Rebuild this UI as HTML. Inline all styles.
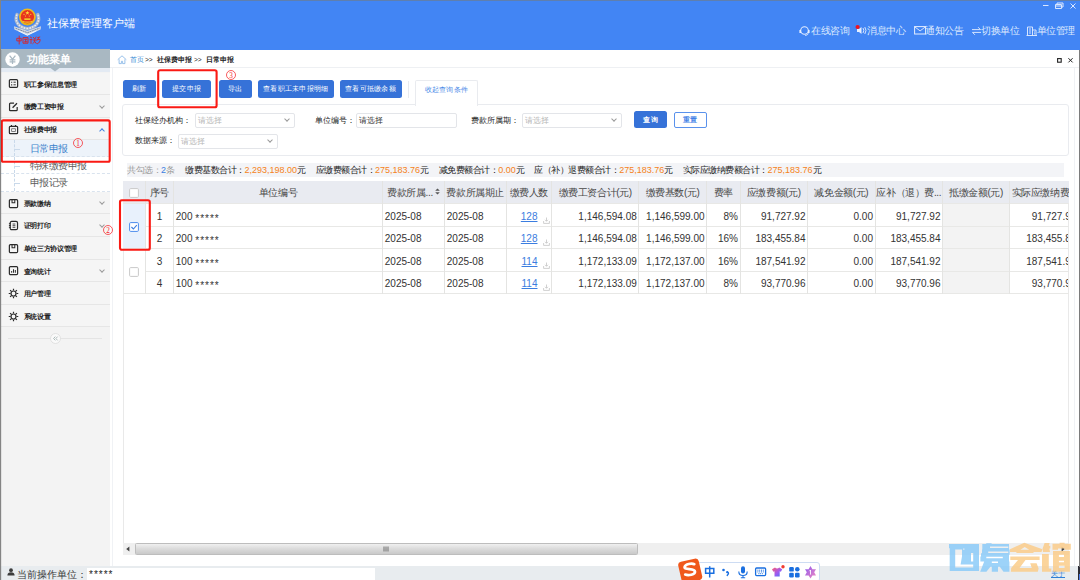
<!DOCTYPE html>
<html lang="zh">
<head>
<meta charset="utf-8">
<title>社保费管理客户端</title>
<style>
*{box-sizing:border-box;margin:0;padding:0}
html,body{width:1080px;height:580px;overflow:hidden;background:#fff;font-family:"Liberation Sans",sans-serif;color:#333}
#app{position:relative;width:1080px;height:580px;overflow:hidden;background:#fff}
.abs,#app>div,#app>svg,#app>span,#app>a{position:absolute}
/* header */
#hdr{left:0;top:0;width:1080px;height:49.5px;background:#4285f4;border-top:1px solid #5f7fae}
#title{left:46.5px;top:16px;font-size:11px;line-height:15px;color:#fff;white-space:nowrap;}
.nav{top:24px;font-size:10px;line-height:14px;color:#dde9fe;white-space:nowrap;letter-spacing:-.5px}
/* sidebar */
#side{left:0;top:49px;width:110px;height:517px;background:#f3f3f3}
#sidehd{left:1px;top:49px;width:109px;height:19.4px;background:#a9b8c2}
#sidehd b{position:absolute;left:26px;top:2.5px;font-size:11px;line-height:15px;color:#fff;letter-spacing:.1px;white-space:nowrap}
#sidestrip{left:1px;top:68.3px;width:109px;height:4.2px;background:#e3eaf3}
.mi{left:1px;width:109px;height:22.6px;border-bottom:1px solid #e6e6e6;background:#f5f5f5}
.mi b{position:absolute;left:22.5px;top:7.2px;font-size:7px;line-height:10px;color:#1c1c1c;white-space:nowrap;letter-spacing:-.3px}
.mi svg{position:absolute;left:6.7px;top:5.8px;width:11px;height:11px}
.mi em{position:absolute;left:99px;top:8.5px;width:4px;height:4px;border-right:1px solid #9a9a9a;border-bottom:1px solid #9a9a9a;transform:rotate(45deg) scale(1,1)}
.mi em.up{top:10.5px;border-color:#3f7fe0;transform:rotate(-135deg)}
.sub{left:1px;width:109px;background:#fff;font-size:10px;letter-spacing:-.5px;line-height:12px;color:#5a5a5a;border-bottom:1px dashed #d9e3ee}
.sub span{position:absolute;left:28.5px;top:3px;white-space:nowrap}
.sub u{position:absolute;left:13px;top:0;bottom:0;width:0;border-left:1px dashed #c9d9ea}
.sub s{position:absolute;left:13px;top:9px;width:6px;height:0;border-top:1px dashed #c9d9ea}
.red{border:1.6px solid #f5181c;border-radius:1px}
.num{color:#f5181c;font-size:9.5px;line-height:11px}
/* main */
#crumb{left:110px;top:49.5px;width:970px;height:18px;background:#fff;border-bottom:1px solid #eef0f3;font-size:6.6px;line-height:10px}
#crumb span{position:absolute;top:5px;white-space:nowrap}
.btn{top:80px;height:18px;background:#3672d8;border-radius:2.5px;color:#fff;font-size:7px;letter-spacing:.25px;text-align:center;line-height:18px;white-space:nowrap}
#status{left:0;top:566px;width:1080px;height:14px;background:#e8ecef}
/*MAINCSS*/
.lbl{font-size:8px;line-height:11px;color:#222;white-space:nowrap;letter-spacing:.1px}
.sel{height:15px;border:1px solid #e3e5e9;border-radius:2px;background:#fff;font-size:8.2px;line-height:13px;padding-left:2px;white-space:nowrap}
.sel i{position:absolute;right:5px;top:3px;width:4px;height:4px;border-right:1px solid #999;border-bottom:1px solid #999;transform:rotate(45deg)}
#sum .s{position:absolute;top:0}
#sum .o{color:#f58220;font-size:9px;letter-spacing:0}
#sum .c{letter-spacing:0}
/*TABLECSS*/
.dc .st{letter-spacing:1px;position:relative;top:2.4px}
.hl{height:1px;background:#e8e8e6}
.vl{width:1px;background:#e4e4e2}
.hc{font-size:10px;letter-spacing:-.4px;line-height:24.6px;color:#484848;white-space:nowrap}
.dc{font-size:10px;line-height:25.2px;color:#333;white-space:nowrap}
/*/MAINCSS*/
</style>
</head>
<body>
<div id="app">
<!-- HEADER -->
<div id="hdr"></div>
<svg id="logo" style="left:10px;top:4px" width="36" height="42" viewBox="10 4 36 42">
  <path d="M17 14.500C14.300 21.500 18.500 27.300 27.400 28.600C36.300 27.300 40.500 21.500 37.800 14.500" fill="none" stroke="#a9b6cb" stroke-width="3.400" stroke-linecap="round"/>
  <path d="M17 14.500C14.300 21.500 18.500 27.300 27.400 28.600C36.300 27.300 40.500 21.500 37.800 14.500" fill="none" stroke="#e9edf4" stroke-width="1.500" stroke-dasharray="1.600 1.200"/>
  <path d="M14 26.300L27.400 30.800L41 26.300L40.600 29.400L27.400 35.600L14.400 29.400Z" fill="#d3dae5"/>
  <path d="M15.500 28.200L27.400 32.700L39.500 28.200" fill="none" stroke="#73819a" stroke-width=".9" stroke-dasharray="2 .5"/>
  <path d="M18.500 30.800L27.400 35.200L36.300 30.800" fill="none" stroke="#f5f7fa" stroke-width="1"/>
  <circle cx="27.400" cy="17" r="8.400" fill="#efb91d"/>
  <circle cx="27.400" cy="16.800" r="6.700" fill="#e8351f"/>
  <path d="M27.400 10.700l.6 1.500h1.500l-1.200 1 .5 1.500-1.400-.9-1.400.9.500-1.500-1.200-1h1.500z" fill="#ffd83a"/>
  <circle cx="24" cy="14.300" r=".6" fill="#ffd83a"/><circle cx="30.800" cy="14.300" r=".6" fill="#ffd83a"/><circle cx="25.500" cy="16" r=".55" fill="#ffd83a"/><circle cx="29.300" cy="16" r=".55" fill="#ffd83a"/>
  <path d="M24.300 18.300h6.200v1.700h-6.200z" fill="#f2c12c"/>
  <path d="M22.300 21.200c3.200 1.100 7 1.100 10.200 0" fill="none" stroke="#f2c12c" stroke-width="1.100"/>
  <path d="M23.500 23.700c2.600.8 5.200.8 7.800 0" fill="none" stroke="#d9a91a" stroke-width=".9"/>
  <g fill="none" stroke="#d7262c" stroke-width=".95" stroke-linecap="round">
    <path d="M17.200 38.300h4v2.600h-4zM19.200 36v8"/>
    <path d="M23.400 37.600h4.600v5.600h-4.600zM24.600 39.300h2.200M25.700 39.300v2.600M24.600 41.800h2.400"/>
    <path d="M30.300 37l1.400 1M30 39.600h2M31 39.600v3.800M33.400 37.400l1 1.300M36 37l-.8 1.600M33.200 40h3.200M34.700 40c0 2-1 3-1.800 3.600M34.800 41.500l1.500 2"/>
    <path d="M37.600 37.600l2.200-.6M37.300 39.400h2.800c.2 2-.8 3.500-2.600 4.300M38.800 37.400c-.2 1-.700 2-1.500 2.800"/>
  </g>
</svg>
<div id="title">社保费管理客户端</div>
<!-- window controls -->
<svg style="left:1040px;top:1px" width="40" height="10" viewBox="0 0 40 10"><g stroke="#dbe7ff" stroke-width="1" fill="none"><path d="M3 4.5h5.5"/><path d="M15.5 3.5h6v4h-6z M17 3.5v-1.5h6v4h-1.5 M15.5 5h6"/><path d="M30.5 2.5l5 5M35.5 2.5l-5 5"/></g></svg>
<!-- top nav -->
<svg style="left:799px;top:25px" width="11" height="12" viewBox="0 0 11 12"><circle cx="5.5" cy="5.5" r="3.8" fill="none" stroke="#e6efff" stroke-width="1.1"/><path d="M1.2 5 v3 M9.8 5 v3" stroke="#e6efff" stroke-width="1.6"/><path d="M9.5 8.5 q-1 2 -3.5 2" stroke="#e6efff" stroke-width=".8" fill="none"/></svg>
<div class="nav" style="left:811px">在线咨询</div>
<svg style="left:854px;top:23px" width="14" height="14" viewBox="0 0 14 14"><path d="M3 6 h2 l2.5 -2 v7 l-2.5 -2 h-2z" fill="#e6efff"/><path d="M9 5 q1.6 2.5 0 5 M10.8 4 q2.4 3.5 0 7" stroke="#e6efff" stroke-width=".9" fill="none"/><circle cx="3.6" cy="4" r="2.1" fill="#f0141e"/></svg>
<div class="nav" style="left:867px">消息中心</div>
<svg style="left:914px;top:26px" width="13" height="10" viewBox="0 0 13 10"><rect x=".6" y=".6" width="11" height="7.4" fill="none" stroke="#e6efff" stroke-width="1"/><path d="M.8 .9 l5.3 4 l5.3 -4" fill="none" stroke="#e6efff" stroke-width=".9"/></svg>
<div class="nav" style="left:925px">通知公告</div>
<svg style="left:971px;top:26px" width="11" height="10" viewBox="0 0 11 10"><path d="M1 3.6 h8.5 l-2.4 -2.4 M10 6.4 h-8.5 l2.4 2.4" fill="none" stroke="#e6efff" stroke-width=".9"/></svg>
<div class="nav" style="left:981px">切换单位</div>
<svg style="left:1026px;top:25px" width="12" height="12" viewBox="0 0 12 12"><path d="M1.5 10.5 v-8.5 h5 v8.5 M6.5 5 h3.5 v5.5 M.5 10.5 h10.5 M3 4h2 M3 6h2 M3 8h2 M8 7h1 M8 8.8h1" fill="none" stroke="#e6efff" stroke-width=".9"/></svg>
<div class="nav" style="left:1036.5px">单位管理</div>

<!-- SIDEBAR -->
<div id="side"></div>
<div id="sidehd"><b>功能菜单</b></div>
<div id="sidestrip"></div>
<svg style="left:49px;top:68px" width="12" height="4" viewBox="0 0 12 4"><path d="M1.5 0 L6 3.6 L10.5 0z" fill="#a9b8c2"/></svg>
<svg style="left:4.5px;top:52px" width="15" height="15" viewBox="0 0 15 15"><circle cx="7.5" cy="7.5" r="7.2" fill="#fff"/><path d="M4.6 3.6 L7.5 7.2 L10.4 3.6 M7.5 7.2 V12 M4.6 7.8 h5.8 M4.6 9.9 h5.8" fill="none" stroke="#a9b8c2" stroke-width="1.2"/></svg>
<!--MENU-->
<div class="mi" style="top:72.5px;height:22.8px"><svg viewBox="0 0 12 12"><rect x="1.5" y="1.8" width="9" height="8.4" rx="1.2" fill="none" stroke="#2a2a2a" stroke-width="1.3"/><path d="M4 4.6v.1M4 7.4v.1" stroke="#2a2a2a" stroke-width="1.2" stroke-linecap="square"/><path d="M6 4.6h2.5M6 7.4h2.5" stroke="#2a2a2a" stroke-width="1"/></svg><b>职工参保信息管理</b></div>
<div class="mi" style="top:95.3px;height:22.7px"><svg viewBox="0 0 12 12"><path d="M10 6.5v3.2a.9.9 0 0 1-.9.9H2.6a.9.9 0 0 1-.9-.9V3.2a.9.9 0 0 1 .9-.9h4" fill="none" stroke="#2a2a2a" stroke-width="1.3"/><path d="M5 7.4l4.8-5" stroke="#2a2a2a" stroke-width="1.4"/></svg><b>缴费工资申报</b><em></em></div>
<div class="mi" style="top:118px;height:22.0px"><svg viewBox="0 0 12 12"><rect x="1.5" y="2.6" width="9" height="8" rx="1" fill="none" stroke="#2a2a2a" stroke-width="1.3"/><path d="M3.8 1.2v2M8.2 1.2v2" stroke="#2a2a2a" stroke-width="1.2"/><rect x="4" y="5.2" width="4" height="3" fill="none" stroke="#555" stroke-width=".8"/></svg><b>社保费申报</b><em class="up"></em></div>
<div class="mi" style="top:191.8px;height:22.5px"><svg viewBox="0 0 12 12"><rect x="1.5" y="1.8" width="9" height="8.6" rx="1.2" fill="none" stroke="#2a2a2a" stroke-width="1.3"/><path d="M4.4 2v3.2h3V2" fill="none" stroke="#2a2a2a" stroke-width="1.1"/></svg><b>票款缴纳</b><em></em></div>
<div class="mi" style="top:214.3px;height:22.7px"><svg viewBox="0 0 12 12"><rect x="2.4" y="1.6" width="8" height="9" rx="1.6" fill="none" stroke="#2a2a2a" stroke-width="1.3"/><path d="M1 4h2M1 6h2M1 8h2" stroke="#2a2a2a" stroke-width="1"/><path d="M5 4.4h3M5 6.2h3M5 8h3" stroke="#2a2a2a" stroke-width=".9"/></svg><b>证明打印</b><em></em></div>
<div class="mi" style="top:237px;height:22.6px"><svg viewBox="0 0 12 12"><rect x="1.5" y="1.8" width="9" height="8.6" rx="1.2" fill="none" stroke="#2a2a2a" stroke-width="1.3"/><path d="M4.4 2v3.2h3V2" fill="none" stroke="#2a2a2a" stroke-width="1.1"/></svg><b>单位三方协议管理</b></div>
<div class="mi" style="top:259.6px;height:22.6px"><svg viewBox="0 0 12 12"><rect x="1.5" y="1.8" width="9" height="8.6" rx="1.2" fill="none" stroke="#2a2a2a" stroke-width="1.3"/><path d="M4 8.5v-2M6 8.5v-4M8 8.5v-3" stroke="#2a2a2a" stroke-width="1.1"/></svg><b>查询统计</b><em></em></div>
<div class="mi" style="top:282.2px;height:22.6px"><svg viewBox="0 0 12 12"><circle cx="6" cy="6" r="2.7" fill="none" stroke="#2a2a2a" stroke-width="1.3"/><path d="M6 .8v2M6 9.2v2M.8 6h2M9.2 6h2M2.3 2.3l1.4 1.4M8.3 8.3l1.4 1.4M2.3 9.7l1.4-1.4M8.3 3.7l1.4-1.4" stroke="#2a2a2a" stroke-width="1.3"/></svg><b>用户管理</b></div>
<div class="mi" style="top:304.8px;height:22.6px"><svg viewBox="0 0 12 12"><circle cx="6" cy="6" r="2.7" fill="none" stroke="#2a2a2a" stroke-width="1.3"/><path d="M6 .8v2M6 9.2v2M.8 6h2M9.2 6h2M2.3 2.3l1.4 1.4M8.3 8.3l1.4 1.4M2.3 9.7l1.4-1.4M8.3 3.7l1.4-1.4" stroke="#2a2a2a" stroke-width="1.3"/></svg><b>系统设置</b></div>
<div class="sub" style="top:140px;height:17.2px;background:#edf3fa;color:#3b82cc;"><u></u><s></s><span>日常申报</span></div>
<div class="sub" style="top:157.2px;height:17.0px;"><u></u><s></s><span>特殊缴费申报</span></div>
<div class="sub" style="top:174.2px;height:17.6px;"><u></u><s></s><span>申报记录</span></div>
<div style="left:8px;top:338px;width:94px;height:0;border-top:1px solid #e4e4e4"></div>
<svg style="left:50px;top:332.5px" width="11" height="11" viewBox="0 0 11 11"><circle cx="5.5" cy="5.5" r="5" fill="#fafafa" stroke="#dcdcdc" stroke-width=".8"/><path d="M5.3 3.6L3.6 5.5l1.7 1.9M7.6 3.6L5.9 5.5l1.7 1.9" fill="none" stroke="#9aa" stroke-width=".8"/></svg>
<svg style="left:0;top:117px" width="114" height="48" viewBox="0 0 114 48"><rect x="1.800" y="3.4" width="107.900" height="41.400" rx="1.500" fill="none" stroke="#fa1a14" stroke-width="2.100"/></svg>
<svg style="left:72.4px;top:136.6px" width="12" height="12" viewBox="0 0 12 12"><circle cx="6" cy="6" r="4.5" fill="none" stroke="#f5242a" stroke-width=".75"/><text x="6" y="8.5" text-anchor="middle" font-family="Liberation Serif,serif" font-size="7.2" fill="#f5242a">1</text></svg>
<!--/MENU-->
<!--MAIN-->
<div id="crumb"><svg style="position:absolute;left:6.8px;top:5.4px" width="10" height="10" viewBox="0 0 10 10"><path d="M.7 4.700L5 .8l4.300 3.900M2.100 4.300v4.300h2.300V6.300h1.200v2.300H7.900V4.300" fill="none" stroke="#86b6e6" stroke-width=".85"/></svg><span style="left:19.5px;color:#3d8fd6">首页</span><span style="left:35px;color:#222">&gt;&gt;</span><span style="left:47px;color:#222;font-weight:bold">社保费申报</span><span style="left:84px;color:#222">&gt;&gt;</span><span style="left:96px;color:#222;font-weight:bold">日常申报</span><svg style="position:absolute;left:946px;top:7px" width="20" height="7" viewBox="0 0 20 7"><rect x="1.6" y="1.6" width="3.6" height="3.6" fill="none" stroke="#222" stroke-width="1.1"/><path d="M12.4 1.2l4.2 4.2M16.6 1.2l-4.2 4.2" stroke="#222" stroke-width="1"/></svg></div>
<div style="left:112px;top:68px;width:1px;height:498px;background:#f0f2f5"></div>
<div style="left:1074px;top:68px;width:1px;height:498px;background:#f0f2f5"></div>
<div class="btn" style="left:122.5px;width:33.5px">刷新</div>
<div class="btn" style="left:162px;width:49px">提交申报</div>
<div class="btn" style="left:218.7px;width:33px">导出</div>
<div class="btn" style="left:257.5px;width:76.3px">查看职工未申报明细</div>
<div class="btn" style="left:339.5px;width:62px">查看可抵缴余额</div>
<div style="left:408px;top:81px;width:1px;height:17px;background:#e8eaee"></div>
<div id="qp" style="left:122px;top:104px;width:947px;height:52px;background:#fff;border:1px solid #e9ebef;border-radius:3px"></div>
<div id="tab" style="left:415px;top:80px;width:63px;height:25.5px;background:#fff;border:1px solid #e9ebef;border-bottom:0;border-radius:2px 2px 0 0;color:#4b8ae8;font-size:7px;letter-spacing:.3px;line-height:18px;text-align:center">收起查询条件</div>
<div class="lbl" style="left:134.5px;top:114.5px">社保经办机构：</div>
<div class="sel" style="left:194.5px;top:113px;width:100px;color:#b5b5b5">请选择<i></i></div>
<div class="lbl" style="left:314.5px;top:114.5px">单位编号：</div>
<div class="sel" style="left:356px;top:113px;width:100.5px;color:#333">请选择</div>
<div class="lbl" style="left:471px;top:114.5px">费款所属期：</div>
<div class="sel" style="left:522px;top:113px;width:100px;color:#b5b5b5">请选择<i></i></div>
<div class="lbl" style="left:134.5px;top:135px">数据来源：</div>
<div class="sel" style="left:177.5px;top:133.7px;width:100px;color:#b5b5b5">请选择<i></i></div>
<div style="left:633.7px;top:111px;width:33.8px;height:17px;background:#3672d8;border-radius:2.5px;color:#fff;font-size:6.6px;line-height:17px;text-align:center;font-weight:bold">查 询</div>
<div style="left:673.7px;top:112px;width:33.3px;height:15.6px;background:#fff;border:1px solid #5a92ec;border-radius:2px;color:#3f7fe6;font-size:6.6px;line-height:13.6px;text-align:center;font-weight:bold">重置</div>
<div id="sum" style="left:127px;top:162.5px;width:937px;height:14px;background:#f3f4f7;font-size:9px;letter-spacing:-.5px;line-height:14px;white-space:nowrap;color:#222"><span class="s" style="left:0;color:#9a9a9a">共勾选：<span class="c" style="color:#3b7de0">2</span>条</span><span class="s" style="left:58px">缴费基数合计：<span class="o">2,293,198.00</span>元</span><span class="s" style="left:188.5px">应缴费额合计：<span class="o">275,183.76</span>元</span><span class="s" style="left:311.7px">减免费额合计：<span class="o">0.00</span>元</span><span class="s" style="left:407.2px">应（补）退费额合计：<span class="o">275,183.76</span>元</span><span class="s" style="left:555.5px">实际应缴纳费额合计：<span class="o">275,183.76</span>元</span></div>
<!--/MAIN-->
<!--TABLE-->
<div id="tb" style="left:122.5px;top:181px;width:946.0px;height:362px;background:#fff;border-left:1px solid #e9e9e9;border-right:1px solid #e9e9e9"></div>
<div id="th" style="left:122.5px;top:181px;width:946.0px;height:22.75px;background:#e9ebf1"></div>
<div style="left:942.5px;top:203.75px;width:67.0px;height:89.75px;background:#f3f3f3"></div>
<div style="left:122.5px;top:203.75px;width:23.0px;height:44.75px;background:#e8f1fc"></div>
<div class="hl" style="left:122.5px;top:203.25px;width:946.0px"></div>
<div class="hl" style="left:145.5px;top:225.5px;width:923.0px"></div>
<div class="hl" style="left:122.5px;top:248.0px;width:946.0px"></div>
<div class="hl" style="left:145.5px;top:270.5px;width:923.0px"></div>
<div class="hl" style="left:122.5px;top:293.0px;width:946.0px"></div>
<div class="vl" style="left:145.0px;top:181px;height:112.5px"></div>
<div class="vl" style="left:173.0px;top:181px;height:112.5px"></div>
<div class="vl" style="left:382.0px;top:181px;height:112.5px"></div>
<div class="vl" style="left:444.0px;top:181px;height:112.5px"></div>
<div class="vl" style="left:505.5px;top:181px;height:112.5px"></div>
<div class="vl" style="left:551.0px;top:181px;height:112.5px"></div>
<div class="vl" style="left:638.25px;top:181px;height:112.5px"></div>
<div class="vl" style="left:706.0px;top:181px;height:112.5px"></div>
<div class="vl" style="left:739.5px;top:181px;height:112.5px"></div>
<div class="vl" style="left:807.0px;top:181px;height:112.5px"></div>
<div class="vl" style="left:874.5px;top:181px;height:112.5px"></div>
<div class="vl" style="left:942.0px;top:181px;height:112.5px"></div>
<div class="vl" style="left:1009.0px;top:181px;height:112.5px"></div>
<div class="hc" style="left:145.5px;top:181px;width:28.0px;height:22.75px;text-align:center;">序号</div>
<div class="hc" style="left:173.5px;top:181px;width:209.0px;height:22.75px;text-align:center;">单位编号</div>
<div class="hc" style="left:382.5px;top:181px;width:62.0px;height:22.75px;text-align:center;">费款所属...<svg width="5" height="7" viewBox="0 0 5 7" style="margin-left:2px;vertical-align:1px"><path d="M.2 2.8L2.500 .4l2.300 2.400zM.2 4.200L2.500 6.600l2.300-2.400z" fill="#555"/></svg></div>
<div class="hc" style="left:444.5px;top:181px;width:61.5px;height:22.75px;text-align:center;">费款所属期止</div>
<div class="hc" style="left:506px;top:181px;width:45.5px;height:22.75px;text-align:center;">缴费人数</div>
<div class="hc" style="left:551.5px;top:181px;width:87.25px;height:22.75px;text-align:center;">缴费工资合计(元)</div>
<div class="hc" style="left:638.75px;top:181px;width:67.75px;height:22.75px;text-align:center;">缴费基数(元)</div>
<div class="hc" style="left:706.5px;top:181px;width:33.5px;height:22.75px;text-align:center;">费率</div>
<div class="hc" style="left:740px;top:181px;width:67.5px;height:22.75px;text-align:center;">应缴费额(元)</div>
<div class="hc" style="left:807.5px;top:181px;width:67.5px;height:22.75px;text-align:center;">减免金额(元)</div>
<div class="hc" style="left:875px;top:181px;width:67.5px;height:22.75px;text-align:center;">应补（退）费...</div>
<div class="hc" style="left:942.5px;top:181px;width:67.0px;height:22.75px;text-align:center;">抵缴金额(元)</div>
<div class="hc" style="left:1009.5px;top:181px;width:59.0px;height:22.75px;text-align:left;padding-left:2px;overflow:hidden;">实际应缴纳费</div>
<div class="dc" style="left:145.5px;top:203.75px;width:28.0px;height:22.25px;text-align:center;">1</div>
<div class="dc" style="left:173.5px;top:203.75px;width:209.0px;height:22.25px;text-align:left;padding-left:2.3px;">200 <span class="st">*****</span></div>
<div class="dc" style="left:382.5px;top:203.75px;width:62.0px;height:22.25px;text-align:left;padding-left:2.3px;">2025-08</div>
<div class="dc" style="left:444.5px;top:203.75px;width:61.5px;height:22.25px;text-align:left;padding-left:2.3px;">2025-08</div>
<div class="dc" style="left:506px;top:203.75px;width:45.5px;height:22.25px"><a style="position:absolute;right:14px;color:#3b7de0;text-decoration:underline">128</a><svg style="position:absolute;left:36.5px;top:13px" width="7" height="7" viewBox="0 0 7 7"><path d="M3.5 .5v3.6M2 2.8l1.5 1.5L5 2.8M.6 4v2.4h5.8V4" fill="none" stroke="#c4c4c4" stroke-width=".8"/></svg></div>
<div class="dc" style="left:551.5px;top:203.75px;width:87.25px;height:22.25px;text-align:right;padding-right:2px;">1,146,594.08</div>
<div class="dc" style="left:638.75px;top:203.75px;width:67.75px;height:22.25px;text-align:right;padding-right:2px;">1,146,599.00</div>
<div class="dc" style="left:706.5px;top:203.75px;width:33.5px;height:22.25px;text-align:right;padding-right:2px;">8%</div>
<div class="dc" style="left:740px;top:203.75px;width:67.5px;height:22.25px;text-align:right;padding-right:2px;">91,727.92</div>
<div class="dc" style="left:807.5px;top:203.75px;width:67.5px;height:22.25px;text-align:right;padding-right:2px;">0.00</div>
<div class="dc" style="left:875px;top:203.75px;width:67.5px;height:22.25px;text-align:right;padding-right:2px;">91,727.92</div>
<div class="dc" style="left:1009.5px;top:203.75px;width:58.5px;height:22.25px;overflow:hidden"><span style="position:absolute;right:-8.3px">91,727.92</span></div>
<div class="dc" style="left:145.5px;top:226px;width:28.0px;height:22.5px;text-align:center;">2</div>
<div class="dc" style="left:173.5px;top:226px;width:209.0px;height:22.5px;text-align:left;padding-left:2.3px;">200 <span class="st">*****</span></div>
<div class="dc" style="left:382.5px;top:226px;width:62.0px;height:22.5px;text-align:left;padding-left:2.3px;">2025-08</div>
<div class="dc" style="left:444.5px;top:226px;width:61.5px;height:22.5px;text-align:left;padding-left:2.3px;">2025-08</div>
<div class="dc" style="left:506px;top:226px;width:45.5px;height:22.5px"><a style="position:absolute;right:14px;color:#3b7de0;text-decoration:underline">128</a><svg style="position:absolute;left:36.5px;top:13px" width="7" height="7" viewBox="0 0 7 7"><path d="M3.5 .5v3.6M2 2.8l1.5 1.5L5 2.8M.6 4v2.4h5.8V4" fill="none" stroke="#c4c4c4" stroke-width=".8"/></svg></div>
<div class="dc" style="left:551.5px;top:226px;width:87.25px;height:22.5px;text-align:right;padding-right:2px;">1,146,594.08</div>
<div class="dc" style="left:638.75px;top:226px;width:67.75px;height:22.5px;text-align:right;padding-right:2px;">1,146,599.00</div>
<div class="dc" style="left:706.5px;top:226px;width:33.5px;height:22.5px;text-align:right;padding-right:2px;">16%</div>
<div class="dc" style="left:740px;top:226px;width:67.5px;height:22.5px;text-align:right;padding-right:2px;">183,455.84</div>
<div class="dc" style="left:807.5px;top:226px;width:67.5px;height:22.5px;text-align:right;padding-right:2px;">0.00</div>
<div class="dc" style="left:875px;top:226px;width:67.5px;height:22.5px;text-align:right;padding-right:2px;">183,455.84</div>
<div class="dc" style="left:1009.5px;top:226px;width:58.5px;height:22.5px;overflow:hidden"><span style="position:absolute;right:-8.3px">183,455.84</span></div>
<div class="dc" style="left:145.5px;top:248.5px;width:28.0px;height:22.5px;text-align:center;">3</div>
<div class="dc" style="left:173.5px;top:248.5px;width:209.0px;height:22.5px;text-align:left;padding-left:2.3px;">100 <span class="st">*****</span></div>
<div class="dc" style="left:382.5px;top:248.5px;width:62.0px;height:22.5px;text-align:left;padding-left:2.3px;">2025-08</div>
<div class="dc" style="left:444.5px;top:248.5px;width:61.5px;height:22.5px;text-align:left;padding-left:2.3px;">2025-08</div>
<div class="dc" style="left:506px;top:248.5px;width:45.5px;height:22.5px"><a style="position:absolute;right:14px;color:#3b7de0;text-decoration:underline">114</a><svg style="position:absolute;left:36.5px;top:13px" width="7" height="7" viewBox="0 0 7 7"><path d="M3.5 .5v3.6M2 2.8l1.5 1.5L5 2.8M.6 4v2.4h5.8V4" fill="none" stroke="#c4c4c4" stroke-width=".8"/></svg></div>
<div class="dc" style="left:551.5px;top:248.5px;width:87.25px;height:22.5px;text-align:right;padding-right:2px;">1,172,133.09</div>
<div class="dc" style="left:638.75px;top:248.5px;width:67.75px;height:22.5px;text-align:right;padding-right:2px;">1,172,137.00</div>
<div class="dc" style="left:706.5px;top:248.5px;width:33.5px;height:22.5px;text-align:right;padding-right:2px;">16%</div>
<div class="dc" style="left:740px;top:248.5px;width:67.5px;height:22.5px;text-align:right;padding-right:2px;">187,541.92</div>
<div class="dc" style="left:807.5px;top:248.5px;width:67.5px;height:22.5px;text-align:right;padding-right:2px;">0.00</div>
<div class="dc" style="left:875px;top:248.5px;width:67.5px;height:22.5px;text-align:right;padding-right:2px;">187,541.92</div>
<div class="dc" style="left:1009.5px;top:248.5px;width:58.5px;height:22.5px;overflow:hidden"><span style="position:absolute;right:-8.3px">187,541.92</span></div>
<div class="dc" style="left:145.5px;top:271px;width:28.0px;height:22.5px;text-align:center;">4</div>
<div class="dc" style="left:173.5px;top:271px;width:209.0px;height:22.5px;text-align:left;padding-left:2.3px;">100 <span class="st">*****</span></div>
<div class="dc" style="left:382.5px;top:271px;width:62.0px;height:22.5px;text-align:left;padding-left:2.3px;">2025-08</div>
<div class="dc" style="left:444.5px;top:271px;width:61.5px;height:22.5px;text-align:left;padding-left:2.3px;">2025-08</div>
<div class="dc" style="left:506px;top:271px;width:45.5px;height:22.5px"><a style="position:absolute;right:14px;color:#3b7de0;text-decoration:underline">114</a><svg style="position:absolute;left:36.5px;top:13px" width="7" height="7" viewBox="0 0 7 7"><path d="M3.5 .5v3.6M2 2.8l1.5 1.5L5 2.8M.6 4v2.4h5.8V4" fill="none" stroke="#c4c4c4" stroke-width=".8"/></svg></div>
<div class="dc" style="left:551.5px;top:271px;width:87.25px;height:22.5px;text-align:right;padding-right:2px;">1,172,133.09</div>
<div class="dc" style="left:638.75px;top:271px;width:67.75px;height:22.5px;text-align:right;padding-right:2px;">1,172,137.00</div>
<div class="dc" style="left:706.5px;top:271px;width:33.5px;height:22.5px;text-align:right;padding-right:2px;">8%</div>
<div class="dc" style="left:740px;top:271px;width:67.5px;height:22.5px;text-align:right;padding-right:2px;">93,770.96</div>
<div class="dc" style="left:807.5px;top:271px;width:67.5px;height:22.5px;text-align:right;padding-right:2px;">0.00</div>
<div class="dc" style="left:875px;top:271px;width:67.5px;height:22.5px;text-align:right;padding-right:2px;">93,770.96</div>
<div class="dc" style="left:1009.5px;top:271px;width:58.5px;height:22.5px;overflow:hidden"><span style="position:absolute;right:-8.3px">93,770.96</span></div>
<svg style="left:129.3px;top:187.5px" width="10" height="10" viewBox="0 0 10 10"><rect x=".6" y=".6" width="8.8" height="8.8" rx="1" fill="#fff" stroke="#c9c9c9" stroke-width="1"/></svg>
<svg style="left:129.3px;top:222px" width="10" height="10" viewBox="0 0 10 10"><rect x=".6" y=".6" width="8.8" height="8.8" rx="1" fill="#fff" stroke="#4a8bec" stroke-width="1"/><path d="M2.4 5l2 2 3.4-3.8" fill="none" stroke="#3b7de0" stroke-width="1.1"/></svg>
<svg style="left:129.3px;top:266.7px" width="10" height="10" viewBox="0 0 10 10"><rect x=".6" y=".6" width="8.8" height="8.8" rx="1" fill="#fff" stroke="#c9c9c9" stroke-width="1"/></svg>
<svg style="left:117px;top:197px" width="36" height="56" viewBox="0 0 36 56"><rect x="3" y="3.2" width="29.8" height="49.6" rx="1.8" fill="none" stroke="#fa1a14" stroke-width="2.1"/></svg>
<svg style="left:102.2px;top:224.3px" width="12" height="12" viewBox="0 0 12 12"><circle cx="6" cy="6" r="4.5" fill="none" stroke="#f5242a" stroke-width=".75"/><text x="6" y="8.5" text-anchor="middle" font-family="Liberation Serif,serif" font-size="7.2" fill="#f5242a">2</text></svg>
<svg style="left:155px;top:66px" width="66" height="44" viewBox="0 0 66 44"><rect x="3.2" y="4.2" width="58.4" height="37.1" rx="1.8" fill="none" stroke="#fa1a14" stroke-width="2.1"/></svg>
<svg style="left:224.8px;top:69px" width="12" height="12" viewBox="0 0 12 12"><circle cx="6" cy="6" r="4.5" fill="none" stroke="#f5242a" stroke-width=".75"/><text x="6" y="8.5" text-anchor="middle" font-family="Liberation Serif,serif" font-size="7.2" fill="#f5242a">3</text></svg>
<div style="left:122.5px;top:543px;width:946.0px;height:12px;background:#efefef"></div>
<div style="left:135px;top:543.3px;width:502.5px;height:11.4px;border:1px solid #bdbdbd;border-radius:1.5px;background:linear-gradient(#f0f0f0,#dcdcdc 45%,#c9c9c9)"></div>
<svg style="left:125px;top:546px" width="6" height="6" viewBox="0 0 6 6"><path d="M4.4 .6v4.8L1.2 3z" fill="#444"/></svg>
<svg style="left:1060px;top:546px" width="6" height="6" viewBox="0 0 6 6"><path d="M1.6 .6v4.8L4.8 3z" fill="#444"/></svg>
<svg style="left:383px;top:546px" width="7" height="6" viewBox="0 0 7 6"><path d="M1 .5v5M3 .5v5M5 .5v5" stroke="#555" stroke-width=".8"/></svg>
<!--/TABLE-->
<div id="status"></div>
<!--BOTTOM-->
<svg style="left:6.5px;top:568px" width="8" height="8" viewBox="0 0 8 8"><circle cx="4" cy="2.2" r="1.9" fill="#3c3c3c"/><path d="M.4 7.6c0-2.4 1.4-3.4 3.6-3.4s3.6 1 3.6 3.4z" fill="#3c3c3c"/></svg>
<div style="left:16.5px;top:567.5px;font-size:10.3px;line-height:13px;color:#3a3a3a;white-space:nowrap">当前操作单位：</div>
<div style="left:86.5px;top:567.5px;width:288px;height:12.5px;background:#fff;font-size:9px;line-height:12.5px;color:#222;padding-left:2.5px;white-space:nowrap"><span style="letter-spacing:1px;position:relative;top:1.5px;font-size:10px">*****</span></div>
<div style="left:0;top:0;width:1px;height:580px;background:#848484"></div><div style="left:1px;top:49.5px;width:1px;height:531px;background:rgba(0,0,0,.07)"></div>
<a style="left:1051px;top:569px;font-size:7.2px;line-height:9px;color:#2f7fd6;text-decoration:underline;white-space:nowrap">关于</a>
<div style="left:1078px;top:566px;width:2px;height:14px;background:#2b2b33"></div><div style="left:1078.5px;top:574px;width:1.5px;height:6px;background:#4f7fe8"></div>
<div style="left:1078.6px;top:49.5px;width:1.4px;height:517px;background:#7c7c7c"></div>
<div style="left:695px;top:562px;width:125px;height:20px;background:#fff;border:1px solid #cddcf3;border-radius:3px"></div>
<svg style="left:676px;top:557px" width="28" height="24" viewBox="0 0 28 24"><g transform="rotate(-13 14 13)"><rect x="3.5" y="3" width="21" height="22" rx="3.5" fill="#f0581c"/><path d="M19.5 8.3c-2.4-1.9-8.6-2.2-10 .4-1.700 3.200 9.500 3.300 9 7-.4 3-7.400 2.700-10.200.7" fill="none" stroke="#fff" stroke-width="2.7" stroke-linecap="round"/></g></svg>
<svg style="left:703px;top:564px" width="116" height="16" viewBox="0 0 116 16"><g fill="none" stroke="#1a6fe0" stroke-width="1.5"><path d="M2.6 4.600h8.200v4.700H2.600zM6.700 2.200v11.300"/></g><circle cx="20.500" cy="6" r="1.300" fill="#1a6fe0"/><path d="M24.400 8.200c1.300.100 1.600 1.700-.2 3.200" fill="none" stroke="#1a6fe0" stroke-width="1.4" stroke-linecap="round"/><circle cx="24.200" cy="8.200" r="1.100" fill="#1a6fe0"/><rect x="38" y="2.200" width="4" height="7.400" rx="2" fill="#1a6fe0"/><path d="M35.800 7.500c0 5.400 8.400 5.400 8.400 0M40 11.600v2M37.800 13.700h4.400" fill="none" stroke="#1a6fe0" stroke-width="1.100"/><rect x="52.600" y="4" width="10" height="7.600" rx="1" fill="none" stroke="#1a6fe0" stroke-width="1.300"/><path d="M54.400 6.200h6.400M54.400 7.900h6.400M55.400 9.700h4.400" stroke="#1a6fe0" stroke-width="1" stroke-dasharray="1 .8"/><defs><linearGradient id="gs" x1="0" y1="0" x2="1" y2="1"><stop offset="0" stop-color="#ff5a6e"/><stop offset=".55" stop-color="#a05af0"/><stop offset="1" stop-color="#3f7cf7"/></linearGradient><linearGradient id="gh" x1="0" y1="0" x2="1" y2="1"><stop offset="0" stop-color="#8f5af0"/><stop offset="1" stop-color="#f08ac0"/></linearGradient></defs><path d="M69 5.200l3-1.700c1.200 1.300 3 1.300 4.200 0l3 1.700-1.300 2.600-1.200-.5v5.300h-5.200V7.300l-1.200.5z" fill="url(#gs)"/><circle cx="80" cy="2.700" r="1.700" fill="#f23b2f"/><g fill="#1a6fe0"><rect x="86.200" y="3" width="4.600" height="4.600" rx="1.200"/><rect x="92" y="3" width="4.600" height="4.600" rx="2.300"/><rect x="86.200" y="8.800" width="4.600" height="4.600" rx="1.200"/><rect x="92" y="8.800" width="4.600" height="4.600" rx="1.200"/></g><path d="M107.500 2l1.900 3.200h3.600l-1.800 3.100 1.800 3.100h-3.600L107.500 14.600l-1.900-3.200H102l1.800-3.100L102 5.200h3.600z" fill="url(#gh)"/><path d="M107.500 6v4.600M106.400 7.200l1.100-1.200" stroke="#fff" stroke-width=".9" fill="none"/></svg>
<svg style="left:946px;top:540px" width="130" height="36" viewBox="946 540 130 36" opacity=".86"><g fill="#8dccf9" fill-rule="evenodd"><path d="M949 544H979V571H949.7V548.3H949Z M955.2 549.6H962V556.5L960.6 564.5H973.2V567.5H955.2Z M971 553H973.2V561.5H971Z M963.2 548.6H964.4V549.8H963.2Z"/><path d="M982.3 544H986.2V543.2H991.6V544H1009V549.4H1009.6V554.8H1009V561.6H1009.4V571.8H1003.5L999.8 566.8H998V571.8H991.8V566.8H990.4L986.4 571.8H980.2L984.2 561.6H980.4V556.4H981V553.2H982V549.4H982.3Z M990 546.4H1008.3V548H990Z M988.2 551.6H1008.3V553.1H988.2Z M986.3 556.8H1002.8V558.3H986.3Z M991.8 561.4H998V563H991.8Z"/></g><g fill="#fbcd8b" fill-rule="evenodd"><path d="M1024.300 542.800L1042.500 549.200L1041.500 552H1033.500V552.900H1016.400V552H1010V549.200Z M1024.700 547L1029.200 549.800H1020.400Z"/><path d="M1010.300 556.500H1039.600V560H1025.500L1019.500 568.100H1031.800L1030.200 563.200H1036.600L1038.600 568.600L1037.800 571.800H1010.900L1011.200 568.100L1018 560H1010.300Z"/><path d="M1044.600 543H1049.700L1048.800 545.800H1050.300V548.600H1049.300L1050 552H1043L1042.600 548.600L1043.600 545.800Z M1042 554H1048.800V568.600H1051.300V571.800H1042Z"/><path d="M1059.600 542.800H1064.600V543.700H1070.800V549.800H1064.700V548.400H1058V549.800H1052.500V543.700H1059.600Z M1053 551H1069.900V571.800H1053Z M1058.900 554.700H1064V557.100H1058.900Z M1058.900 560.800H1064V562.300H1058.900Z M1058.900 565.700H1064.600V568.100H1058.900Z"/></g></svg>
<!--/BOTTOM-->
</div>
</body>
</html>
